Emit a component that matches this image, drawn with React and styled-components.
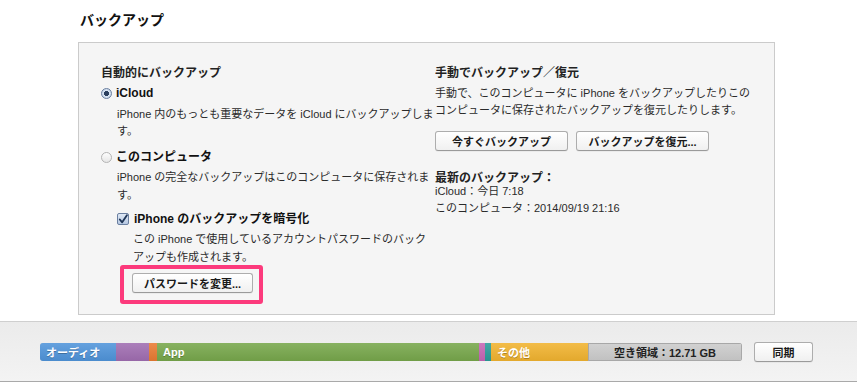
import React from "react";
import styled, { createGlobalStyle } from "styled-components";

const GlobalStyle = createGlobalStyle`
  html, body {
    margin: 0;
    padding: 0;
    background: #fff;
  }
  body {
    font-family: "Liberation Sans", "Noto Sans CJK JP", sans-serif;
    color: #222;
  }
`;

const Page = styled.div`
  width: 857px;
  height: 382px;
  display: flex;
  flex-direction: column;
  overflow: hidden;
`;

const Main = styled.div`
  padding: 10px 0 0 78px;
  height: 311px;
  box-sizing: border-box;
`;

const PageTitle = styled.h2`
  margin: 0 0 0 2px;
  font-size: 14px;
  line-height: 20px;
  font-weight: 700;
  color: #111;
`;

const Panel = styled.div`
  margin-top: 12px;
  width: 697px;
  height: 273px;
  box-sizing: border-box;
  background: #f5f5f5;
  border: 1px solid #cbcbcb;
  display: grid;
  grid-template-columns: 334px 1fr;
  padding: 22px 0 0 22px;
`;

const Column = styled.div`
  display: flex;
  flex-direction: column;
`;

const Heading = styled.div`
  font-size: 12px;
  line-height: ${(p) => p.$lh || 16}px;
  font-weight: 700;
  color: #222;
`;

const Option = styled.label`
  display: flex;
  align-items: center;
  gap: 4px;
  margin-top: ${(p) => p.$top || 0}px;
  margin-left: ${(p) => p.$indent || 0}px;
  font-size: 12px;
  line-height: 16px;
  font-weight: 700;
  color: #111;
`;

const Radio = styled.span`
  width: 11px;
  height: 11px;
  border-radius: 50%;
  box-sizing: border-box;
  border: 1px solid ${(p) => (p.$on ? "#6a7fa0" : "#b4b4b4")};
  background: ${(p) =>
    p.$on
      ? "radial-gradient(circle, #2b3f5e 0 2.3px, #d9e4f2 2.8px, #b8c9e0 100%)"
      : "linear-gradient(#fdfdfd, #e6e6e6)"};
`;

const Check = styled.span`
  width: 12px;
  height: 12px;
  box-sizing: border-box;
  border: 1px solid #6a7fa0;
  border-radius: 2px;
  background: linear-gradient(#dfe8f4, #b6c8e2);
  display: flex;
  align-items: center;
  justify-content: center;
  margin-right: 1px;
`;

const Desc = styled.p`
  margin: ${(p) => p.$top || 0}px 0 0 ${(p) => p.$indent || 0}px;
  font-size: 11px;
  line-height: ${(p) => p.$lh || 17}px;
  color: #2a2a2a;
`;

const Highlight = styled.div`
  margin: -1px 0 0 19px;
  width: 143px;
  height: 39px;
  box-sizing: border-box;
  border: 4px solid #fc3a7c;
  border-radius: 3px;
  padding: 4px 0 0 8px;
`;

const Button = styled.button`
  height: 20px;
  width: ${(p) => p.$w}px;
  box-sizing: border-box;
  padding: 0;
  font-family: "Liberation Sans", "Noto Sans CJK JP", sans-serif;
  font-size: 11px;
  font-weight: 700;
  color: #1a1a1a;
  background: linear-gradient(#ffffff, #f0f0f0);
  border: 1px solid #adadad;
  border-bottom-color: #9a9a9a;
  border-radius: 3px;
  box-shadow: 0 1px 0 rgba(0, 0, 0, 0.04);
`;

const ButtonRow = styled.div`
  display: flex;
  gap: 8px;
  margin-top: 12px;
`;

const Meta = styled.div`
  margin-top: 20px;
  display: flex;
  flex-direction: column;
`;

const MetaLine = styled.div`
  font-size: 11px;
  line-height: ${(p) => p.$lh || 17}px;
  margin-top: ${(p) => p.$top || 0}px;
  color: #2a2a2a;
`;

const Footer = styled.div`
  flex: 1;
  margin-top: 10px;
  border-top: 1px solid #cfcfcf;
  border-bottom: 1px solid #a9a9a9;
  background: linear-gradient(#ebebeb, #f3f3f3);
  display: flex;
  align-items: center;
  padding: 0 0 0 40px;
`;

const Bar = styled.div`
  display: flex;
  width: 702px;
  height: 18px;
  border-radius: 3px;
  overflow: hidden;
  box-shadow: inset 0 0 0 1px rgba(0, 0, 0, 0.12);
`;

const Segment = styled.div`
  width: ${(p) => p.$w}px;
  flex: ${(p) => (p.$grow ? 1 : "none")};
  background-image: linear-gradient(rgba(255, 255, 255, 0.12), rgba(0, 0, 0, 0.06));
  background-color: ${(p) => p.$c};
  display: flex;
  align-items: center;
  justify-content: ${(p) => (p.$center ? "center" : "flex-start")};
  padding-left: ${(p) => (p.$center ? 0 : 6)}px;
  box-sizing: border-box;
  font-size: 11px;
  font-weight: 700;
  color: ${(p) => (p.$dark ? "#222" : "#fff")};
  text-shadow: ${(p) => (p.$dark ? "none" : "0 1px 0 rgba(0,0,0,0.25)")};
  box-shadow: ${(p) => (p.$dark ? "inset 0 0 0 1px #a8a8a8" : "none")};
  white-space: nowrap;
`;

const SyncButton = styled(Button)`
  margin-left: 12px;
`;

function CheckMark() {
  return (
    <svg width="11" height="11" viewBox="0 0 11 11">
      <path
        d="M2 5.5 L4.6 8.6 L9.8 0.8"
        fill="none"
        stroke="#1f3556"
        strokeWidth="2"
        strokeLinecap="round"
        strokeLinejoin="round"
      />
    </svg>
  );
}

export default function App() {
  return (
    <Page>
      <GlobalStyle />
      <Main>
        <PageTitle>バックアップ</PageTitle>
        <Panel>
          <Column>
            <Heading>自動的にバックアップ</Heading>
            <Option $top={4}>
              <Radio $on />
              iCloud
            </Option>
            <Desc $top={5} $indent={16}>
              iPhone 内のもっとも重要なデータを iCloud にバックアップしま
              <br />
              す。
            </Desc>
            <Option $top={9}>
              <Radio />
              このコンピュータ
            </Option>
            <Desc $top={3} $indent={16} $lh={18}>
              iPhone の完全なバックアップはこのコンピュータに保存されま
              <br />
              す。
            </Desc>
            <Option $top={7} $indent={16}>
              <Check>
                <CheckMark />
              </Check>
              iPhone のバックアップを暗号化
            </Option>
            <Desc $top={3} $indent={32} $lh={18}>
              この iPhone で使用しているアカウントパスワードのバック
              <br />
              アップも作成されます。
            </Desc>
            <Highlight>
              <Button $w={121}>パスワードを変更...</Button>
            </Highlight>
          </Column>
          <Column>
            <Heading>手動でバックアップ／復元</Heading>
            <Desc $top={4}>
              手動で、このコンピュータに iPhone をバックアップしたりこの
              <br />
              コンピュータに保存されたバックアップを復元したりします。
            </Desc>
            <ButtonRow>
              <Button $w={133}>今すぐバックアップ</Button>
              <Button $w={133}>バックアップを復元...</Button>
            </ButtonRow>
            <Meta>
              <Heading $lh={14}>最新のバックアップ：</Heading>
              <MetaLine $lh={12}>iCloud：今日 7:18</MetaLine>
              <MetaLine $top={3}>このコンピュータ：2014/09/19 21:16</MetaLine>
            </Meta>
          </Column>
        </Panel>
      </Main>
      <Footer>
        <Bar>
          <Segment $w={76} $c="#4f94da">オーディオ</Segment>
          <Segment $w={33} $c="#a06db1" />
          <Segment $w={8} $c="#e97b32" />
          <Segment $w={322} $c="#77a74b">App</Segment>
          <Segment $w={3} $c="#c565b4" />
          <Segment $w={6} $c="#2a9c9a" />
          <Segment $w={97} $c="#f1b32f">その他</Segment>
          <Segment $grow $dark $center $c="#cccccc">
            空き領域：12.71 GB
          </Segment>
        </Bar>
        <SyncButton $w={59}>同期</SyncButton>
      </Footer>
    </Page>
  );
}
